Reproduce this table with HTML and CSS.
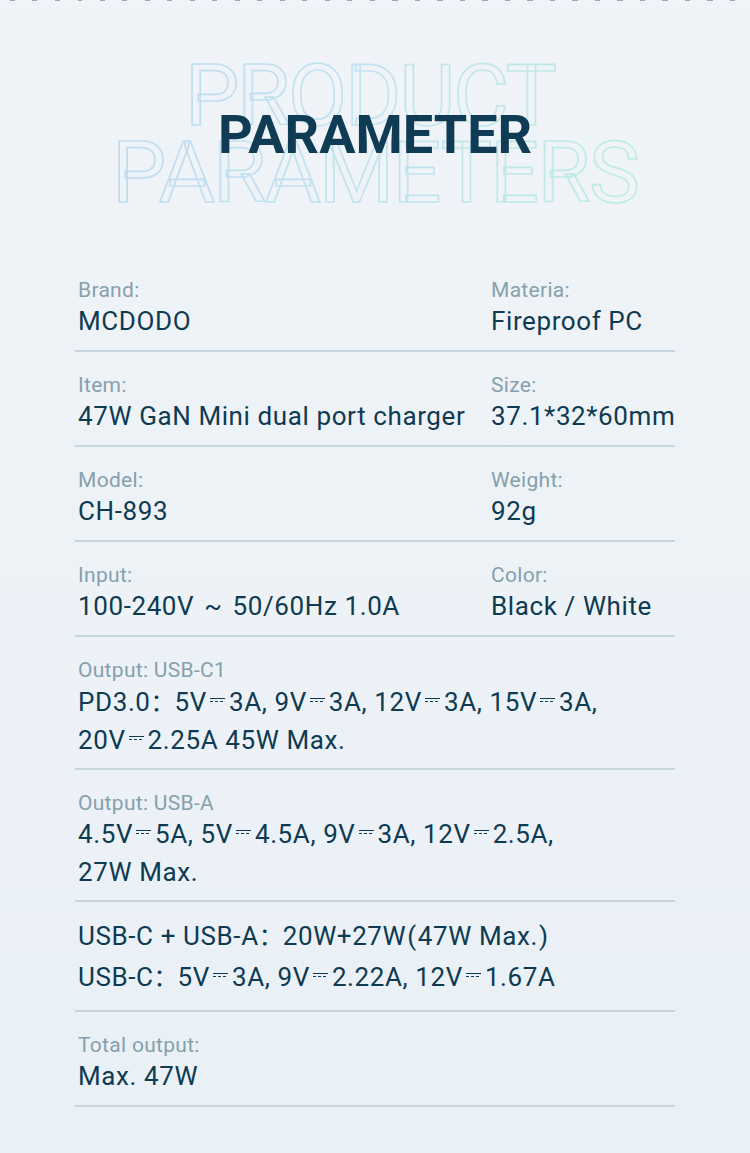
FILE: index.html
```html
<!DOCTYPE html>
<html lang="en">
<head>
<meta charset="utf-8">
<title>Parameter</title>
<link rel="stylesheet" href="styles.css">
</head>
<body>
<div class="page">
  <header class="hero">
    <svg class="ghost" width="750" height="257" viewBox="0 0 750 257" aria-hidden="true">
      <defs>
        <linearGradient id="gs" x1="100" y1="0" x2="650" y2="0" gradientUnits="userSpaceOnUse">
          <stop offset="0" stop-color="#c0dcf1"/>
          <stop offset="0.55" stop-color="#c3e4f0"/>
          <stop offset="1" stop-color="#bdeee0"/>
        </linearGradient>
      </defs>
      <text x="371" y="125" text-anchor="middle" textLength="372" class="ghost-t">PRODUCT</text>
      <text x="376" y="202" text-anchor="middle" textLength="528" class="ghost-t">PARAMETERS</text>
    </svg>
    <h1 class="title">PARAMETER</h1>
  </header>

  <section class="specs">
    <div class="row two">
      <div class="cell"><div class="lbl">Brand:</div><div class="val">MCDODO</div></div>
      <div class="cell"><div class="lbl">Materia:</div><div class="val">Fireproof PC</div></div>
    </div>
    <div class="row two">
      <div class="cell"><div class="lbl">Item:</div><div class="val">47W GaN Mini dual port charger</div></div>
      <div class="cell"><div class="lbl">Size:</div><div class="val">37.1*32*60mm</div></div>
    </div>
    <div class="row two">
      <div class="cell"><div class="lbl">Model:</div><div class="val">CH-893</div></div>
      <div class="cell"><div class="lbl">Weight:</div><div class="val">92g</div></div>
    </div>
    <div class="row two">
      <div class="cell"><div class="lbl">Input:</div><div class="val">100-240V <span class="tilde">~</span> 50/60Hz 1.0A</div></div>
      <div class="cell"><div class="lbl">Color:</div><div class="val">Black / White</div></div>
    </div>
    <div class="row multi">
      <div class="lbl">Output: USB-C1</div>
      <div class="val">PD3.0<span class="fw">：</span>5V<span class="dc"></span>3A, 9V<span class="dc"></span>3A, 12V<span class="dc"></span>3A, 15V<span class="dc"></span>3A,<br>20V<span class="dc"></span>2.25A 45W Max.</div>
    </div>
    <div class="row multi">
      <div class="lbl">Output: USB-A</div>
      <div class="val">4.5V<span class="dc"></span>5A, 5V<span class="dc"></span>4.5A, 9V<span class="dc"></span>3A, 12V<span class="dc"></span>2.5A,<br>27W Max.</div>
    </div>
    <div class="row combo">
      <div class="val">USB-C + USB-A<span class="fw">：</span>20W+27W<span class="par">(</span>47W Max.<span class="par">)</span><br>USB-C<span class="fw">：</span>5V<span class="dc"></span>3A, 9V<span class="dc"></span>2.22A, 12V<span class="dc"></span>1.67A</div>
    </div>
    <div class="row">
      <div class="lbl">Total output:</div>
      <div class="val">Max. 47W</div>
    </div>
  </section>
</div>
</body>
</html>
```

FILE: styles.css
```css
html, body {
  margin: 0;
  padding: 0;
}

body {
  width: 750px;
  height: 1153px;
  overflow: hidden;
  background: linear-gradient(180deg, #f0f4f8 0%, #edf2f7 50%, #e9f0f6 100%);
  font-family: Roboto, "Noto Sans", "Noto Sans CJK SC", sans-serif;
  color: #0e3b52;
}

.page {
  width: 750px;
  height: 1153px;
  background:
    repeating-linear-gradient(90deg, transparent 0 10px, #8fadbf 10px 15px, transparent 15px 22.5px) top left / 100% 1px no-repeat;
}

.hero {
  display: grid;
  height: 257px;
}

.hero > * {
  grid-area: 1 / 1;
}

.ghost {
  display: block;
}

.ghost-t {
  font-family: Roboto, sans-serif;
  font-size: 86px;
  font-weight: 400;
  fill: none;
  stroke: url(#gs);
  stroke-width: 1.7;
}

.title {
  margin: 107px 0 0;
  justify-self: center;
  align-self: start;
  font-family: Roboto, sans-serif;
  font-weight: 700;
  font-size: 54px;
  line-height: 56px;
  letter-spacing: 0;
  color: #0f3c54;
}

.specs {
  width: 600px;
  margin-left: 75px;
}

.row {
  padding: 21px 0 10px 3px;
  border-bottom: 2px solid #c6d5de;
}

.row.two {
  display: grid;
  grid-template-columns: 413px 1fr;
}

.row.multi {
  padding-bottom: 9px;
}

.row.combo {
  padding: 13px 0 13px 3px;
}

.row.combo .val {
  line-height: 39px;
}

.lbl {
  font-size: 21px;
  line-height: 24px;
  letter-spacing: 0.3px;
  color: #86a0ad;
}

.val {
  font-size: 26px;
  line-height: 38px;
  letter-spacing: 0.6px;
  color: #0e3b52;
  white-space: nowrap;
}

.tilde {
  margin: 0 3px;
}

.fw {
  font-family: "Noto Sans CJK SC", sans-serif;
  font-size: 24px;
  letter-spacing: 0;
}

.par {
  margin: 0 1px;
}

.dc {
  display: inline-block;
  width: 15px;
  height: 3px;
  margin: 0 4px 0 3px;
  vertical-align: 0.34em;
  border-top: 1.5px solid currentColor;
  background: repeating-linear-gradient(90deg, currentColor 0 3px, transparent 3px 5px) left bottom / 100% 1.5px no-repeat;
}
```
